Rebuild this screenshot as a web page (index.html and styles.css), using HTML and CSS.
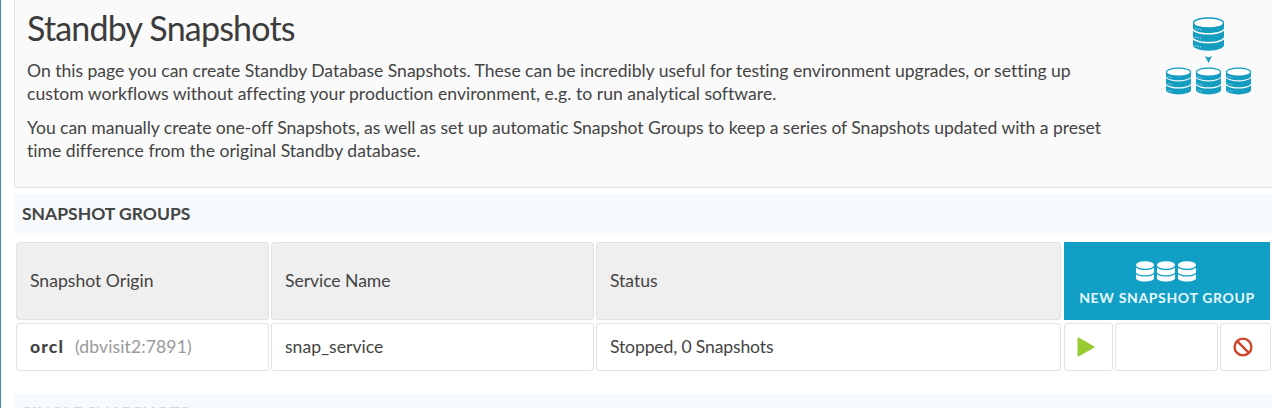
FILE: index.html
```
<!DOCTYPE html>
<html lang="en">
<head>
  <meta charset="UTF-8">
  <meta name="viewport" content="width=device-width, initial-scale=1.0">
  <title>Standby Snapshots</title>
  <link rel="stylesheet" href="styles.css">
</head>
<body>
  <svg width="0" height="0" class="defs">
    <symbol id="db" viewBox="0 0 31 34">
      <path fill="#149cc1" d="M0 5.500C0 2.500 7 .3 15.500 .3S31 2.500 31 5.500V11C31 13.700 24 16 15.500 16S0 13.700 0 11Z"/>
      <ellipse cx="15.500" cy="6" rx="14.300" ry="4.300" fill="#fff"/>
      <path fill="#149cc1" d="M0 13.700C3 16.200 8.500 17.600 15.500 17.600S28 16.200 31 13.700V19.500C31 22.500 24 24.800 15.500 24.800S0 22.500 0 19.500Z"/>
      <path fill="#149cc1" d="M0 22.500C3 25 8.500 26.400 15.500 26.400S28 25 31 22.500V28.300C31 31.300 24 33.700 15.500 33.700S0 31.300 0 28.300Z"/>
      <path stroke="#8fd0e2" stroke-width="1.300" stroke-dasharray="1.500 1" fill="none" d="M2 11.500l6 1.500M2 20l6 1.500M2 28.600l6 1.500"/>
    </symbol>
    <symbol id="db-small" viewBox="0 0 18 21">
      <ellipse cx="9" cy="4" rx="9" ry="3.800"/>
      <path d="M0 6.800C2 8.400 5 9.100 9 9.100S16 8.400 18 6.800V11C18 12.700 14 14.200 9 14.200S0 12.700 0 11Z"/>
      <path d="M0 13.200C2 14.800 5 15.500 9 15.500S16 14.800 18 13.200V17.300C18 19.100 14 20.500 9 20.500S0 19.100 0 17.300Z"/>
    </symbol>
  </svg>

  <div class="page">
    <div class="intro">
      <div class="intro-text">
        <h1>Standby Snapshots</h1>
        <p><span class="snug">On this page you can create Standby Database Snapshots. These can be incredibly useful for testing environment upgrades, or setting up</span><br><span class="loose">custom workflows without affecting your production environment, e.g. to run analytical software.</span></p>
        <p><span class="tight">You can manually create one-off Snapshots, as well as set up automatic Snapshot Groups to keep a series of Snapshots updated with a preset</span><br>time difference from the original Standby database.</p>
      </div>
      <div class="diagram">
        <svg class="db-main"><use href="#db"/></svg>
        <svg class="arrow" viewBox="0 0 7 7"><path d="M0 0L3.500 1.500L7 0L3.500 7Z"/></svg>
        <div class="db-row">
          <svg><use href="#db"/></svg>
          <svg><use href="#db"/></svg>
          <svg><use href="#db"/></svg>
        </div>
      </div>
    </div>

    <h2 class="section">SNAPSHOT GROUPS</h2>

    <div class="table">
      <div class="cell head">Snapshot Origin</div>
      <div class="cell head"><span class="tight">Service Name</span></div>
      <div class="cell head"><span class="tight">Status</span></div>
      <button class="new-group">
        <span class="new-icons">
          <svg><use href="#db-small"/></svg>
          <svg><use href="#db-small"/></svg>
          <svg><use href="#db-small"/></svg>
        </span>
        <span class="new-label">NEW SNAPSHOT GROUP</span>
      </button>

      <div class="cell"><b>orcl</b><span class="host">(dbvisit2:7891)</span></div>
      <div class="cell">snap_service</div>
      <div class="cell"><span class="status">Stopped, 0 Snapshots</span></div>
      <div class="actions">
        <div class="cell action">
          <svg class="play" viewBox="0 0 18 20"><path d="M1.500 1.500L16.500 10L1.500 18.500Z"/></svg>
        </div>
        <div class="cell action"></div>
        <div class="cell action">
          <svg class="ban" viewBox="0 0 20 20"><circle cx="10" cy="10" r="8.400"/><path d="M4.200 4.200L15.800 15.800"/></svg>
        </div>
      </div>
    </div>

    <h2 class="section single">SINGLE SNAPSHOTS</h2>
  </div>
</body>
</html>
```
FILE: styles.css
```
* {
  box-sizing: border-box;
}
body {
  margin: 0;
  height: 408px;
  overflow: hidden;
  font-family: Lato, sans-serif;
  font-size: 17.6px;
  font-variant-ligatures: none;
  color: #444;
  background: #fff;
}
svg {
  display: block;
}
.defs {
  display: none;
}
.page {
  height: 408px;
  border-left: 1px solid #3d8da8;
  padding-left: 13px;
  overflow: hidden;
}
.intro {
  display: flex;
  justify-content: space-between;
  width: 1270px;
  height: 188px;
  padding: 8px 32px 0 12px;
  background: #fafafa;
  border: 1px solid #e0e3e5;
  border-top: none;
  border-radius: 0 0 3px 3px;
}
h1 {
  margin: 0 0 12px;
  font-size: 34px;
  font-weight: 400;
  line-height: 40px;
  letter-spacing: -0.8px;
  color: #3c3c3c;
}
p {
  margin: 0 0 12px;
  line-height: 22.600px;
  white-space: nowrap;
}
.loose {
  letter-spacing: 0.02px;
}
.snug {
  letter-spacing: -0.03px;
}
.tight {
  letter-spacing: -0.06px;
}
.diagram {
  display: flex;
  flex-direction: column;
  align-items: center;
  width: 86px;
  padding-top: 9px;
}
.db-main {
  width: 31px;
  height: 34px;
}
.arrow {
  width: 7px;
  height: 7px;
  margin: 5px 0 4px;
  fill: #149cc1;
}
.db-row {
  display: flex;
  gap: 5px;
}
.db-row svg {
  width: 25px;
  height: 28px;
}
.section {
  width: 1270px;
  height: 39px;
  margin: 6px 0 0;
  padding-left: 8px;
  background: #f6fafc;
  font-size: 17.5px;
  font-weight: 700;
  line-height: 40px;
}
.table {
  display: grid;
  grid-template-columns: 253px 323px 465px 207px;
  grid-template-rows: 78px 48px;
  gap: 3px 2px;
  width: 1256px;
  margin: 9px 0 0 2px;
}
.cell {
  display: flex;
  align-items: center;
  padding: 0 0 1px 13px;
  border: 1px solid #e2e2e2;
  border-radius: 3px;
  white-space: nowrap;
}
.head {
  padding-bottom: 2px;
  background: #efefef;
}
.new-group {
  display: flex;
  flex-direction: column;
  align-items: center;
  margin-left: 1px;
  padding: 19px 2px 0 0;
  border: none;
  background: #119fc5;
  color: #e6f8ff;
  font-family: Lato, sans-serif;
}
.new-icons {
  display: flex;
  gap: 3px;
  margin-bottom: 6px;
}
.new-icons svg {
  width: 18px;
  height: 21px;
  fill: #fff;
}
.new-label {
  margin-left: 2px;
  font-size: 14px;
  font-weight: 700;
  line-height: 20px;
  letter-spacing: 0.65px;
  white-space: nowrap;
}
b {
  font-weight: 900;
  letter-spacing: 1.1px;
}
.host {
  margin-left: 11px;
  letter-spacing: 0.1px;
  color: #999;
}
.status {
  letter-spacing: -0.15px;
}
.actions {
  display: grid;
  grid-template-columns: 49px 103px 51px;
  gap: 2px;
  margin-left: 1px;
}
.action {
  justify-content: center;
  padding: 0;
}
.play {
  width: 18px;
  height: 20px;
  margin-right: 5px;
  fill: #98cb32;
  stroke: #98cb32;
  stroke-width: 2;
  stroke-linejoin: round;
}
.ban {
  width: 20px;
  height: 20px;
  margin-right: 5px;
  fill: none;
  stroke: #cf4527;
  stroke-width: 2.4;
}
.single {
  margin-top: 23px;
  line-height: 38px;
  color: #d3d7da;
}
```
